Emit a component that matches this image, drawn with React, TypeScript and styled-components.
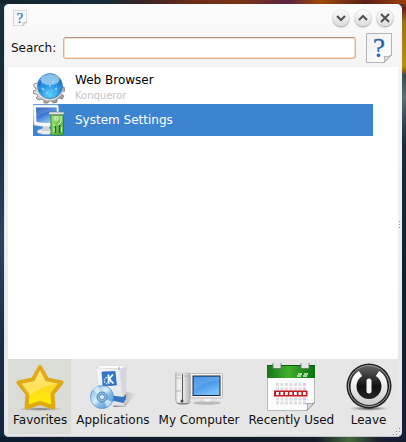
import React, { useState } from "react";
import styled, { createGlobalStyle } from "styled-components";

const GlobalStyle = createGlobalStyle`
  * { box-sizing: border-box; }
  html, body, #root { height: 100%; }
  body {
    margin: 0;
    font-family: "DejaVu Sans", sans-serif;
    font-size: 12px;
    color: #111;
  }
  button { font: inherit; color: inherit; border: 0; padding: 0; background: none; }
`;

const Desktop = styled.div`
  display: flex;
  min-height: 100%;
  padding: 4px 4px 5px;
  background:
    linear-gradient(90deg, #14242f 0%, #152c38 25%, #3a2424 36%, #6e2c18 48%, #7a3216 60%, #5a2440 71%, #a04a08 79%, #5c1d18 90%, #a04010 100%) top / 100% 4px no-repeat,
    linear-gradient(90deg, #0d1c30 0%, #101a28 50%, #141c2a 78%, #44693a 86%, #1c2230 93%, #141a30 100%) bottom / 100% 5px no-repeat,
    linear-gradient(180deg, #8a3a12 0%, #6b2113 2%, #a07020 5%, #b98d13 15%, #9a5a1c 16%, #36504f 17%, #5a7078 22%, #2c4656 28%, #1a2c3c 33%, #0c2233 60%, #16203a 100%) right / 4px 100% no-repeat,
    linear-gradient(180deg, #17303c 0%, #14293a 25%, #2c4264 54%, #1a3048 75%, #10263e 100%);
`;

const Window = styled.main`
  position: relative;
  flex: 1;
  min-width: 0;
  display: flex;
  flex-direction: column;
  padding: 0 4px 3px;
  border-radius: 5px;
  background: linear-gradient(180deg, #fbfbfb 0, #f4f4f4 60px, #f0f0f0 200px, #e6e6e6 100%);
  box-shadow: inset 0 -1px 0 #c4c7c9, inset 1px 0 0 #e0e2e3;
`;

const TitleBar = styled.header`
  display: flex;
  align-items: center;
  justify-content: space-between;
  height: 28px;
  padding: 0 5px;
`;

const WindowControls = styled.div`
  display: flex;
  gap: 6px;
`;

const ControlButton = styled.button`
  display: grid;
  place-items: center;
  width: 16px;
  height: 16px;
  border-radius: 50%;
  background: linear-gradient(180deg, #fbfbfb, #dedede);
  box-shadow: 0 1px 2px 0 #999, 0 0 1px #bbb;
`;

const SearchRow = styled.form`
  display: flex;
  align-items: center;
  gap: 6px;
  height: 35px;
  padding: 0 6px 4px 3px;
`;

const SearchInput = styled.input`
  flex: 1;
  min-width: 0;
  height: 22px;
  margin: 0 4px 0 1px;
  padding: 0 5px;
  font: inherit;
  border: 1px solid #e3b090;
  border-top-color: #b09488;
  border-radius: 3px;
  background: #fff;
  box-shadow: inset 0 0 0 1px #f8ddcb;
  outline: 0;
`;

const HelpButton = styled.button`
  display: flex;
`;

const Results = styled.ul`
  flex: 1;
  margin: 0;
  padding: 5px 25px;
  list-style: none;
  background: #fff;
`;

const ResultButton = styled.button<{ $selected: boolean }>`
  display: flex;
  align-items: center;
  gap: 10px;
  width: 100%;
  height: 32px;
  text-align: left;
  background: ${(p) => (p.$selected ? "#3c84d0" : "transparent")};
  color: ${(p) => (p.$selected ? "#fff" : "#000")};
`;

const ResultText = styled.span`
  display: flex;
  flex-direction: column;
  line-height: 16px;
`;

const Subtitle = styled.small`
  font-size: 10px;
  color: #c4c4c4;
`;

const Tabs = styled.nav`
  display: flex;
  height: 75px;
  background: #e6e6e6;
`;

const Tab = styled.button<{ $active: boolean }>`
  display: flex;
  flex-direction: column;
  align-items: center;
  padding: 4px 4px 0 5px;
  line-height: 18px;
  white-space: nowrap;
  background: ${(p) => (p.$active ? "#dadcd8" : "transparent")};
  &:last-child { flex: 1; }
`;

const Grip = styled.svg`
  position: absolute;
  right: 1px;
  bottom: 1px;
`;

const SideGrip = styled.svg`
  position: absolute;
  right: 1px;
  top: 50%;
`;

const HelpPage = ({ width, height }: { width: number; height: number }) => (
  <svg width={width} height={height} viewBox="0 0 26 30" aria-hidden="true">
    <defs>
      <linearGradient id="page" x1="0" y1="0" x2="1" y2="1">
        <stop offset="0" stopColor="#f0f0f0" />
        <stop offset="1" stopColor="#fff" />
      </linearGradient>
    </defs>
    <path d="M.5 .5H25.5V22L18 29.500H.5Z" fill="url(#page)" stroke="#b2b4b6" />
    <path d="M18 29.500C19 27 19 25 18 23.500C21 24 24 23.500 25.500 22Z" fill="#e4e4e4" stroke="#9c9c9c" strokeWidth=".8" />
    <text x="13" y="24" textAnchor="middle" fontFamily="Liberation Serif, serif" fontSize="27" fill="#2462b0" stroke="#2462b0" strokeWidth=".3">?</text>
  </svg>
);

const Glyph = ({ d }: { d: string }) => (
  <svg width="10" height="10" viewBox="0 0 10 10" fill="none" stroke="#505050" strokeWidth="2" aria-hidden="true">
    <path d={d} />
  </svg>
);

const GlobeIcon = () => (
  <svg width="32" height="32" viewBox="0 0 32 32" aria-hidden="true">
    <defs>
      <radialGradient id="globe" cx=".5" cy=".85" r=".85">
        <stop offset="0" stopColor="#5fd0ff" />
        <stop offset=".5" stopColor="#2491e2" />
        <stop offset="1" stopColor="#1763b8" />
      </radialGradient>
      <linearGradient id="gear" x1="0" y1="0" x2="1" y2="1">
        <stop offset="0" stopColor="#f4f4f4" />
        <stop offset=".5" stopColor="#c0c0c0" />
        <stop offset="1" stopColor="#8a8a8a" />
      </linearGradient>
    </defs>
    <path
      d="M4 11L1 12L1 15L3 16L3 18L0 19L1 22L4 22L5 24L3 26L6 28L9 27L11 28L11 31L15 31L16 29L19 29L20 31L24 30L24 27L26 26L29 27L31 24L28 22L29 20L32 19L31 15L29 15L28 11Z"
      fill="url(#gear)"
      stroke="#6c6c6c"
      strokeWidth=".7"
      strokeLinejoin="round"
    />
    <path d="M3 20Q9 28 17 28Q25 28 30 19" fill="none" stroke="#fff" strokeWidth="1" opacity=".8" />
    <circle cx="17" cy="14" r="12.500" fill="url(#globe)" stroke="#2878bd" strokeWidth=".6" />
    <ellipse cx="17" cy="7.500" rx="9.500" ry="5.500" fill="#c4e6fb" opacity=".65" />
    <path d="M5 15Q17 24 29 14M9 7Q8 17 13 26M17 2Q28 13 21 26" fill="none" stroke="#9be0ff" strokeWidth=".4" opacity=".5" />
    <g fill="#e3f8ff">
      <circle cx="10" cy="17" r=".8" /><circle cx="17" cy="14" r=".8" /><circle cx="23" cy="17" r=".8" /><circle cx="14" cy="21" r=".7" /><circle cx="20" cy="10" r=".7" />
    </g>
  </svg>
);

const SettingsIcon = () => (
  <svg width="32" height="32" viewBox="0 0 32 32" aria-hidden="true">
    <defs>
      <linearGradient id="screen" x1="0" y1="0" x2=".6" y2="1">
        <stop offset="0" stopColor="#1545a8" />
        <stop offset=".5" stopColor="#3978d5" />
        <stop offset="1" stopColor="#9cc7f4" />
      </linearGradient>
      <linearGradient id="card" x1="0" y1="0" x2="1" y2="1">
        <stop offset="0" stopColor="#a5e67c" />
        <stop offset="1" stopColor="#4aa935" />
      </linearGradient>
    </defs>
    <ellipse cx="13" cy="27.500" rx="9" ry="3" fill="#e9eef3" stroke="#9aa7b4" strokeWidth=".6" />
    <path d="M10 21H16L17 27H9Z" fill="#ccd3da" />
    <path d="M0 1H25L27 21Q14 24 1 21Z" fill="#f6f8fa" stroke="#d5dce4" strokeWidth=".6" />
    <path d="M3 3.500H23.500L24.500 18Q14 20 3.500 18Z" fill="url(#screen)" />
    <path d="M3 3.500H23.500V7Q12 7 3 13Z" fill="#fff" opacity=".18" />
    <rect x="18" y="11" width="12.500" height="20" rx="1" fill="url(#card)" stroke="#2f8a25" />
    <rect x="16" y="8" width="15" height="2.500" fill="#dfe7df" stroke="#708078" strokeWidth=".6" />
    <path d="M28 12V18L25 21M20 20L22 22M22 13H25V16H22Z" fill="none" stroke="#d8f8c8" strokeWidth="1" />
    <path d="M22.500 22V29M26.500 21V29" stroke="#226c24" strokeWidth="1.500" />
    <path d="M21 24V28M28.500 23V28" stroke="#c9f3b5" strokeWidth="1" />
  </svg>
);

const StarIcon = () => (
  <svg width="48" height="48" viewBox="0 0 48 48" aria-hidden="true">
    <defs>
      <linearGradient id="star" x1="0" y1="0" x2="0" y2="1">
        <stop offset="0" stopColor="#ffdf50" />
        <stop offset=".5" stopColor="#ffd820" />
        <stop offset="1" stopColor="#fff400" />
      </linearGradient>
      <radialGradient id="shade"><stop offset="0" stopColor="#555" stopOpacity=".8" /><stop offset="1" stopColor="#777" stopOpacity="0" /></radialGradient>
    </defs>
    <ellipse cx="24" cy="46" rx="23" ry="2" fill="url(#shade)" />
    <path d="M24 4L31 16.500L45.500 19.500L36.500 31L37.500 44.500L24 40L10.500 44.500L11.500 31L2.500 19.500L17 16.500Z" fill="url(#star)" stroke="#e0a812" strokeWidth="4" strokeLinejoin="round" />
    <path d="M24 6L30 18L43 20.500Q27 22 13 33L5 20.500L18 18Z" fill="#fff" opacity=".25" />
  </svg>
);

const ApplicationsIcon = () => (
  <svg width="48" height="48" viewBox="0 0 48 48" aria-hidden="true">
    <defs>
      <linearGradient id="boxside" x1="0" y1="0" x2="1" y2="1">
        <stop offset="0" stopColor="#f8f8f8" /><stop offset="1" stopColor="#dfe1e5" />
      </linearGradient>
      <linearGradient id="disc" x1="0" y1="0" x2="1" y2="1">
        <stop offset="0" stopColor="#6ea9e0" /><stop offset=".45" stopColor="#d8efff" /><stop offset=".6" stopColor="#86bbe8" /><stop offset="1" stopColor="#5294d4" />
      </linearGradient>
      <linearGradient id="cast"><stop offset="0" stopColor="#555" stopOpacity=".7" /><stop offset="1" stopColor="#777" stopOpacity="0" /></linearGradient>
    </defs>
    <path d="M35 28L47 31L36 44H24Z" fill="url(#cast)" />
    <path d="M7 5L11 2.500L39 3L36.500 6Z" fill="#fff" stroke="#c6c8cc" strokeWidth=".4" />
    <path d="M7 5L31 6L35 43L11 41Z" fill="url(#boxside)" stroke="#cdd0d4" strokeWidth=".5" />
    <path d="M31 6L37.500 3L37 38L34 43Z" fill="#d3d6da" />
    <path d="M19 32L34 34L37 31V36L34.500 40L20 37Z" fill="#3577c2" />
    <path d="M13 9L26 8.500L27.500 22L14 23Z" fill="#3278c7" stroke="#195ba9" strokeWidth=".6" />
    <circle cx="18.500" cy="17.500" r="3.200" fill="none" stroke="#c9e4ff" strokeWidth="1.500" strokeDasharray="1.500 1" />
    <path d="M19.500 11.500V20M24 11.500L20 16L24.500 20.500" fill="none" stroke="#fff" strokeWidth="1.700" />
    <path d="M30 4V7" stroke="#999" fill="none" />
    <circle cx="13" cy="34" r="11.500" fill="url(#disc)" stroke="#4d8ac4" strokeWidth=".7" />
    <path d="M13 34L4 27A11 11 0 0 1 9 23ZM13 34L23 39A11 11 0 0 1 18 44Z" fill="#e4f6ff" opacity=".7" />
    <circle cx="13" cy="34" r="5" fill="#8bb8e1" stroke="#4e82ba" />
    <circle cx="13" cy="34" r="2.500" fill="#e4eff9" stroke="#426fa5" strokeWidth=".7" />
  </svg>
);

const ComputerIcon = () => (
  <svg width="48" height="48" viewBox="0 0 48 48" aria-hidden="true">
    <defs>
      <linearGradient id="tower"><stop offset="0" stopColor="#b4b6b8" /><stop offset=".2" stopColor="#f2f2f2" /><stop offset=".6" stopColor="#e6e6e6" /><stop offset="1" stopColor="#b0b0b0" /></linearGradient>
      <linearGradient id="monitor" x1="0" y1="0" x2=".5" y2="1"><stop offset="0" stopColor="#3287df" /><stop offset=".6" stopColor="#4f9eec" /><stop offset="1" stopColor="#79c0fa" /></linearGradient>
    </defs>
    <ellipse cx="8" cy="39.500" rx="7" ry="2" fill="#777" />
    <path d="M0 10H15V40H2L0 37Z" fill="url(#tower)" stroke="#b0b2b4" strokeWidth=".5" />
    <path d="M7.500 11V37" stroke="#55585a" strokeWidth="1" />
    <path d="M1 12H6M1 15H6M1 28H6M9 13H14" stroke="#a8a8a8" strokeWidth=".8" />
    <circle cx="7" cy="38" r="1.500" fill="#444" />
    <ellipse cx="32" cy="40" rx="14" ry="1.800" fill="#b9bbbd" />
    <path d="M29 33H36L38 38Q32 40 27 38Z" fill="#f3f3f3" stroke="#bbb" strokeWidth=".5" />
    <rect x="15.500" y="10.500" width="32" height="24.500" rx="1" fill="#f4f4f4" stroke="#bbb" />
    <rect x="18" y="13" width="27" height="19.500" fill="url(#monitor)" stroke="#202c38" />
    <path d="M19 14H44.500V17Q30 18 19 27Z" fill="#fff" opacity=".12" />
  </svg>
);

const CalendarIcon = () => {
  const columns = [0, 1, 2, 3, 4, 5, 6];
  return (
    <svg width="48" height="48" viewBox="0 0 48 48" aria-hidden="true">
      <defs>
        <linearGradient id="green"><stop offset="0" stopColor="#147818" /><stop offset=".45" stopColor="#43ae2c" /><stop offset="1" stopColor="#087010" /></linearGradient>
      </defs>
      <path d="M.5 3H47.500V40L40 47.500H.5Z" fill="#fcfcfc" stroke="#b7b9bb" />
      <path d="M0 2H48V15H0Z" fill="url(#green)" />
      <path d="M0 2H48V3H0Z" fill="#075e0b" />
      <path d="M31 11H35M37 11H41M30 13H34M36 13H40" stroke="#d6f0d0" strokeWidth="1.700" />
      {[6, 34].map((x) => <path key={x} d={`M${x} 0V5.500H${x + 8}V0`} fill="#e2e5e2" stroke="#69706a" strokeWidth=".8" />)}
      {[20, 24.5, 34.5, 38.5].map((y) => columns.map((c) => (
        <rect key={`${y}-${c}`} x={9 + c * 4.5} y={y} width="3" height="3" fill={c === 6 ? "#dcc4f7" : "#dedede"} />
      )))}
      <rect x="7" y="27.500" width="33.500" height="6" fill="#c31b22" />
      {columns.map((c) => <rect key={c} x={9 + c * 4.5} y="29" width="2.800" height="3" fill="#fff" />)}
      <path d="M40 47.500C41 44 41 42 39.500 40.500C43 41 46 41 47.500 39.500Z" fill="#e7e7e7" stroke="#858585" strokeWidth=".8" />
    </svg>
  );
};

const LeaveIcon = () => (
  <svg width="48" height="48" viewBox="0 0 48 48" aria-hidden="true">
    <defs>
      <linearGradient id="black" x1="0" y1="0" x2="0" y2="1"><stop offset="0" stopColor="#656565" /><stop offset=".5" stopColor="#111" /><stop offset="1" stopColor="#303030" /></linearGradient>
      <linearGradient id="silver" x1="0" y1="0" x2="0" y2="1"><stop offset="0" stopColor="#fff" /><stop offset="1" stopColor="#d0d0d0" /></linearGradient>
      <radialGradient id="footing"><stop offset="0" stopColor="#444" /><stop offset="1" stopColor="#777" stopOpacity="0" /></radialGradient>
    </defs>
    <ellipse cx="24" cy="45.500" rx="20" ry="2.500" fill="url(#footing)" />
    <circle cx="24" cy="23" r="22.500" fill="#242424" />
    <circle cx="24" cy="23" r="20.500" fill="url(#black)" stroke="#9b9b9b" strokeWidth="1" />
    <path d="M15.500 10.500A15.500 15.500 0 1 0 32.500 10.500" fill="none" stroke="url(#silver)" strokeWidth="6" />
    <path d="M24 18V28" stroke="#f3f3f3" strokeWidth="5" strokeLinecap="round" />
  </svg>
);

const controls = [
  { label: "Minimize", d: "M1 3L5 7L9 3" },
  { label: "Maximize", d: "M1 7L5 3L9 7" },
  { label: "Close", d: "M1 1L9 9M9 1L1 9" },
];

const tabs = [
  { label: "Favorites", Icon: StarIcon },
  { label: "Applications", Icon: ApplicationsIcon },
  { label: "My Computer", Icon: ComputerIcon },
  { label: "Recently Used", Icon: CalendarIcon },
  { label: "Leave", Icon: LeaveIcon },
];

const favorites = [
  { title: "Web Browser", subtitle: "Konqueror", Icon: GlobeIcon },
  { title: "System Settings", Icon: SettingsIcon },
];

export default function App() {
  const [tab, setTab] = useState("Favorites");
  const [selected, setSelected] = useState("System Settings");
  return (
    <>
      <GlobalStyle />
      <Desktop>
        <Window>
          <TitleBar>
            <HelpPage width={14} height={16} />
            <WindowControls>
              {controls.map(({ label, d }) => (
                <ControlButton key={label} type="button" aria-label={label}><Glyph d={d} /></ControlButton>
              ))}
            </WindowControls>
          </TitleBar>
          <SearchRow onSubmit={(e) => e.preventDefault()}>
            <label htmlFor="search">Search:</label>
            <SearchInput id="search" type="text" />
            <HelpButton type="button" aria-label="Help"><HelpPage width={26} height={30} /></HelpButton>
          </SearchRow>
          <Results>
            {favorites.map(({ title, subtitle, Icon }) => (
              <li key={title}>
                <ResultButton type="button" $selected={selected === title} onClick={() => setSelected(title)}>
                  <Icon />
                  <ResultText>
                    <span>{title}</span>
                    {subtitle && <Subtitle>{subtitle}</Subtitle>}
                  </ResultText>
                </ResultButton>
              </li>
            ))}
          </Results>
          <Tabs>
            {tabs.map(({ label, Icon }) => (
              <Tab key={label} type="button" $active={tab === label} onClick={() => setTab(label)}>
                <Icon />
                <span>{label}</span>
              </Tab>
            ))}
          </Tabs>
          <SideGrip width="2" height="8" viewBox="0 0 2 8" fill="#999" aria-hidden="true">
            <path d="M0 0H1V1H0ZM0 3H1V4H0ZM0 6H1V7H0Z" />
          </SideGrip>
          <Grip width="8" height="8" viewBox="0 0 8 8" fill="#8c8c8c" aria-hidden="true">
            <path d="M6 0H7V1H6ZM3 3H4V4H3ZM6 3H7V4H6ZM0 6H1V7H0ZM3 6H4V7H3Z" />
          </Grip>
        </Window>
      </Desktop>
    </>
  );
}
